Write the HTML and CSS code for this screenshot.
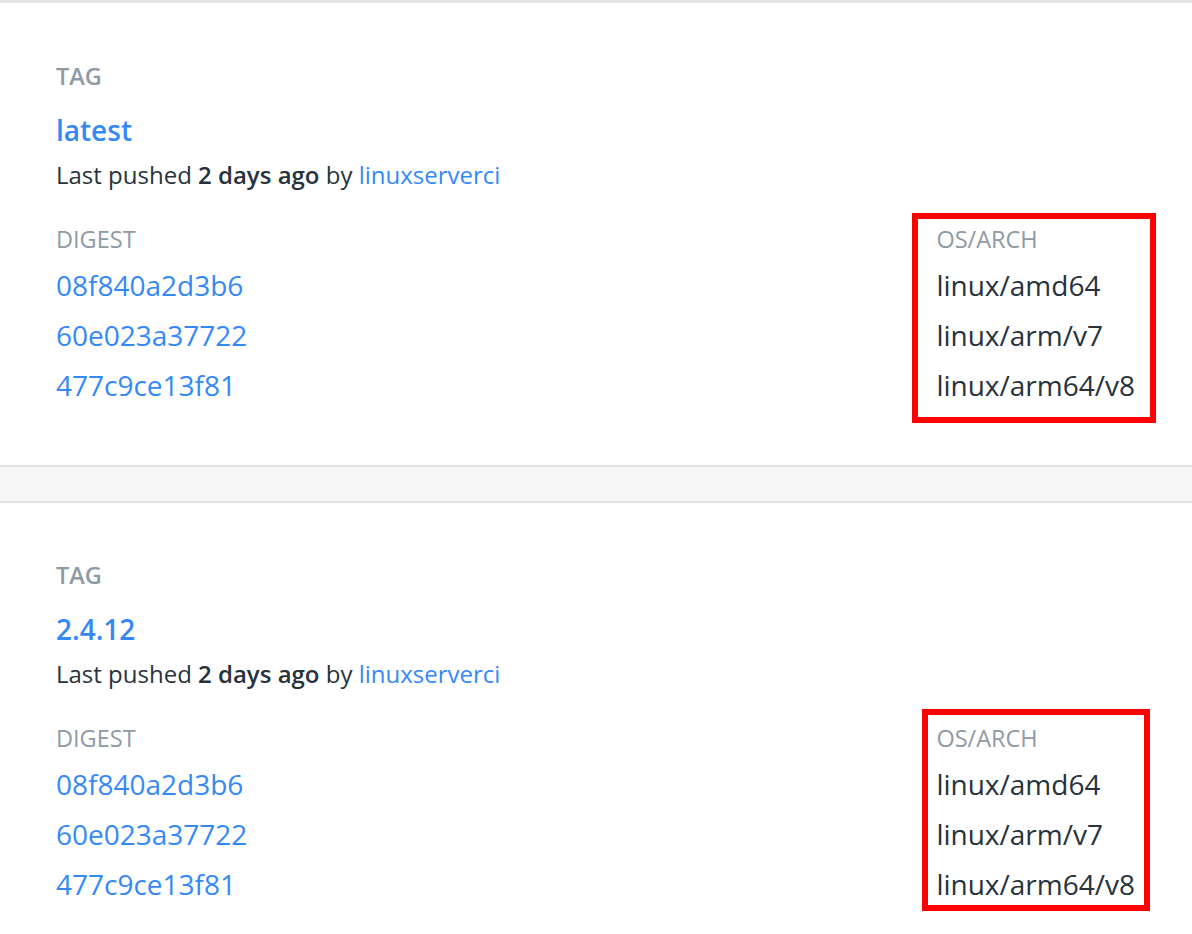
FILE: index.html
```html
<!DOCTYPE html>
<html>
<head>
<meta charset="utf-8">
<link rel="stylesheet" href="styles.css">
</head>
<body>
<div class="page">
  <section class="card card-first">
    <div class="label tag-label">TAG</div>
    <a class="tag-name">latest</a>
    <div class="pushed">Last pushed <strong>2 days ago</strong> by <a class="user">linuxserverci</a></div>
    <div class="details">
      <div class="col">
        <div class="label col-label">DIGEST</div>
        <a class="row link">08f840a2d3b6</a>
        <a class="row link">60e023a37722</a>
        <a class="row link">477c9ce13f81</a>
      </div>
      <div class="col arch">
        <div class="highlight hl-one"></div>
        <div class="label col-label">OS/ARCH</div>
        <div class="row">linux/amd64</div>
        <div class="row">linux/arm/v7</div>
        <div class="row">linux/arm64/v8</div>
      </div>
    </div>
  </section>
  <div class="spacer"></div>
  <section class="card card-second">
    <div class="label tag-label">TAG</div>
    <a class="tag-name">2.4.12</a>
    <div class="pushed">Last pushed <strong>2 days ago</strong> by <a class="user">linuxserverci</a></div>
    <div class="details">
      <div class="col">
        <div class="label col-label">DIGEST</div>
        <a class="row link">08f840a2d3b6</a>
        <a class="row link">60e023a37722</a>
        <a class="row link">477c9ce13f81</a>
      </div>
      <div class="col arch">
        <div class="highlight hl-two"></div>
        <div class="label col-label">OS/ARCH</div>
        <div class="row">linux/amd64</div>
        <div class="row">linux/arm/v7</div>
        <div class="row">linux/arm64/v8</div>
      </div>
    </div>
  </section>
</div>
</body>
</html>
```
FILE: styles.css
```css
html, body {
  margin: 0;
  padding: 0;
  background: #ffffff;
}
body {
  font-family: "Open Sans", "Noto Sans", sans-serif;
  color: #27333c;
  overflow: hidden;
}
.page {
  width: 1192px;
}
.card {
  background: #ffffff;
  padding: 55px 57px 55px 56px;
  display: flex;
  flex-direction: column;
  align-items: flex-start;
}
.card-first {
  border-top: 3px solid #e4e4e9;
  border-bottom: 2px solid #e2e2e6;
}
.card-second {
  border-top: 2px solid #e2e2e6;
  padding-top: 54px;
}
.spacer {
  height: 34px;
  background: #f6f6f6;
}
.label {
  color: #8e9aa5;
  font-size: 23.5px;
}
.tag-label {
  font-weight: 600;
  line-height: 36px;
}
.tag-name {
  display: block;
  margin-top: 16px;
  font-size: 28px;
  font-weight: 600;
  line-height: 40px;
  color: #3589f6;
}
.pushed {
  margin-top: 9px;
  font-size: 24px;
  line-height: 32px;
  color: #27333c;
}
.pushed strong {
  font-weight: 600;
}
.user {
  color: #3589f6;
}
.details {
  margin-top: 27px;
  width: 100%;
  display: flex;
  justify-content: space-between;
}
.col {
  display: flex;
  flex-direction: column;
}
.arch {
  position: relative;
}
.col-label {
  line-height: 42px;
  font-weight: 400;
}
.row {
  font-size: 28px;
  line-height: 50px;
  color: #27333c;
  white-space: nowrap;
}
.row.link {
  color: #3589f6;
}
.highlight {
  position: absolute;
  border: 6px solid #ff0000;
  box-sizing: border-box;
  pointer-events: none;
}
.hl-one {
  left: -24px;
  top: -5px;
  width: 244px;
  height: 210px;
}
.hl-two {
  left: -14px;
  top: -8px;
  width: 228px;
  height: 202px;
}
```
